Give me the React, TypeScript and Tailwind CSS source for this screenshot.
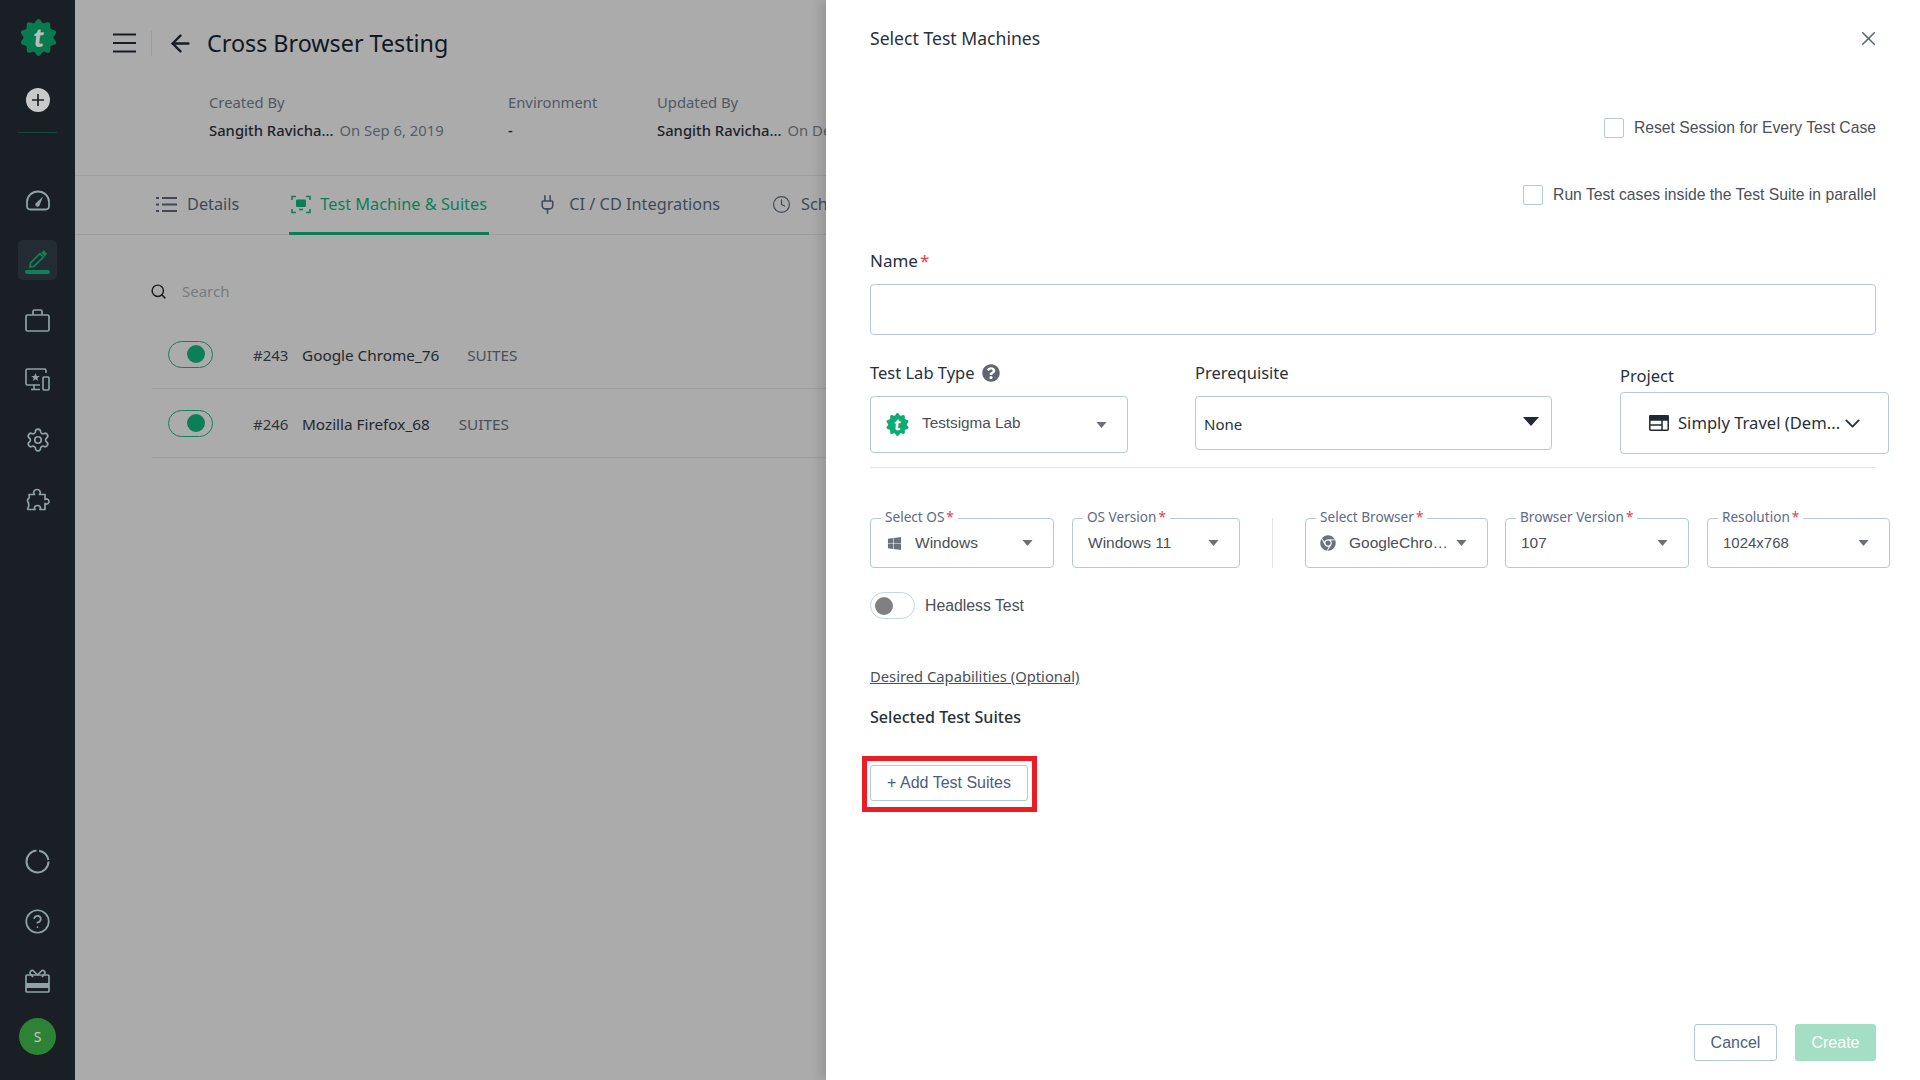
import React from "react";
import { Settings, CircleHelp, Plug, Clock, Search, X, ChevronDown, ArrowLeft } from "lucide-react";
import { FaChrome, FaWindows, FaQuestionCircle } from "react-icons/fa";

const noto = "font-['Noto_Sans',sans-serif]";
const arial = "font-['Liberation_Sans',Arial,sans-serif]";

function badgePath(cx: number, cy: number, r1: number, r2: number, n: number) {
  let d = "";
  const steps = n * 8;
  for (let i = 0; i <= steps; i++) {
    const a = (i / steps) * Math.PI * 2;
    const r = (r1 + r2) / 2 + ((r2 - r1) / 2) * Math.cos(a * n);
    d += `${i === 0 ? "M" : "L"}${(cx + r * Math.sin(a)).toFixed(2)} ${(cy - r * Math.cos(a)).toFixed(2)}`;
  }
  return d + "Z";
}

function Logo({ size, color, t }: { size: number; color: string; t: string }) {
  return (
    <svg width={size} height={size} viewBox="0 0 36 36">
      <path d={badgePath(18, 18, 14.5, 18, 10)} fill={color} />
      <text x="18" y="27" textAnchor="middle" fontSize="25" fontWeight="700" fontStyle="italic" fill={t} fontFamily="Noto Sans, sans-serif" transform="rotate(-6 18 18)">t</text>
    </svg>
  );
}

function Caret({ w = 11, h = 6, color = "#6b6f76" }: { w?: number; h?: number; color?: string }) {
  return (
    <svg className="shrink-0" width={w} height={h} viewBox="0 0 10 6"><polygon points="0,0 10,0 5,6" fill={color} /></svg>
  );
}

function SideIcon({ children, mt }: { children: React.ReactNode; mt: string }) {
  return <div className={`flex h-[40px] w-[39px] items-center justify-center ${mt}`}>{children}</div>;
}

function Sidebar() {
  const c = "#8fa3a3";
  return (
    <aside className="flex h-full w-[75px] shrink-0 flex-col items-center bg-[#191f25]">
      <div className="mt-[19px] ml-[2px] flex h-[36px] items-center justify-center">
        <Logo size={37} color="#087a50" t="#b9bdb9" />
      </div>
      <div className="mt-[33px] flex h-[24px] w-[24px] items-center justify-center rounded-full bg-[#c9c9c9]">
        <svg width="14" height="14" viewBox="0 0 14 14"><path d="M7 1v12M1 7h12" stroke="#1a2026" strokeWidth="1.7" /></svg>
      </div>
      <div className="mt-[20px] h-px w-[39px] bg-[#0d4a35]" />
      <SideIcon mt="mt-[47px]">
        <svg width="24" height="21" viewBox="0 0 24 21" fill="none" stroke={c} strokeWidth="1.800">
          <path d="M4.500 19.500H19.500c2 0 3.500-1 3.500-3.500V12C23 6 18 1.500 12 1.500S1 6 1 12V16c0 2.500 1.500 3.500 3.500 3.500Z" />
          <path d="M9.500 13.500L17 6.500l-3.500 9a2.200 2.200 0 1 1-4-2Z" fill={c} stroke="none" />
        </svg>
      </SideIcon>
      <SideIcon mt="mt-[20px]">
        <div className="flex h-[40px] w-[39px] flex-col items-center justify-center rounded-[5px] bg-[#232b33] pt-[2px]">
          <svg width="22" height="19" viewBox="0 0 22 19" fill="none" stroke="#0d8159" strokeWidth="1.800">
            <path d="M3 18l.5-4L13 4.500l3.500 3.500L7 17.500l-4 .5Z" />
            <path d="M15.500 2.500l3.500 3.500" strokeWidth="3.500" />
          </svg>
          <div className="mt-[2px] h-[4px] w-[25px] rounded-[2px] bg-[#0d8159]" />
        </div>
      </SideIcon>
      <SideIcon mt="mt-[20px]">
        <svg width="25" height="23" viewBox="0 0 25 23" fill="none" stroke={c} strokeWidth="1.700">
          <rect x="1" y="6" width="23" height="16" rx="1.500" />
          <path d="M8 6V2.500A1.500 1.500 0 0 1 9.500 1h6A1.500 1.500 0 0 1 17 2.500V6" />
        </svg>
      </SideIcon>
      <SideIcon mt="mt-[19px]">
        <svg width="25" height="23" viewBox="0 0 25 23" fill="none" stroke={c} strokeWidth="1.600">
          <path d="M21 5V2.500A1.500 1.500 0 0 0 19.500 1H2.500A1.500 1.500 0 0 0 1 2.500V15.500A1.500 1.500 0 0 0 2.500 17H15" />
          <path d="M9 17v4M6 21.500h9" />
          <rect x="18" y="9" width="6" height="13" rx="1" />
          <polygon points="10.500,5 11.700,8 14.800,8 12.300,10 13.200,13 10.500,11.200 7.800,13 8.700,10 6.200,8 9.300,8" fill={c} stroke="none" />
        </svg>
      </SideIcon>
      <SideIcon mt="mt-[21px]"><Settings size={26} color={c} strokeWidth={1.6} /></SideIcon>
      <SideIcon mt="mt-[20px]">
        <svg width="25" height="25" viewBox="0 0 25 25" fill="none" stroke={c} strokeWidth="1.700" strokeLinejoin="round">
          <path d="M4 6.500h5.500c-1.800-1.500-.5-5 2.500-5s4.300 3.500 2.500 5H20v5c1.500-1.300 4-.2 4 2s-2.500 3.300-4 2V21.500h-5c1.300-2.500-.5-4-2.500-4s-4 1.500-2.500 4H3.500c-1-.1-1-.6-.5-1.500 1.200-2.200 1.200-3.800 0-6-.8-1.500 0-3.200 1-4 .6-.5.300-2 0-3.500Z" />
        </svg>
      </SideIcon>
      <div className="flex-1" />
      <SideIcon mt="">
        <svg width="25" height="25" viewBox="0 0 25 25" fill="none" stroke={c} strokeWidth="2">
          <path d="M23.500 12.500A11 11 0 1 1 11.500 1.500" />
          <path d="M14 1.700A11 11 0 0 1 23.400 11" />
        </svg>
      </SideIcon>
      <SideIcon mt="mt-[20px]"><CircleHelp size={27} color={c} strokeWidth={1.5} /></SideIcon>
      <SideIcon mt="mt-[20px]">
        <svg width="25" height="24" viewBox="0 0 25 24" fill="none" stroke={c} strokeWidth="1.700">
          <rect x="1" y="6" width="23" height="17" rx="1" />
          <path d="M1 14h23v5H1Z" fill={c} stroke="none" />
          <path d="M12.500 6L8 1.500a2.500 2.500 0 0 0-3 3L8 8M12.500 6L17 1.500a2.500 2.500 0 0 1 3 3L17 8" />
        </svg>
      </SideIcon>
      <div className={`mt-[17px] mb-[25px] flex h-[37px] w-[37px] items-center justify-center rounded-full bg-[#2d8236] text-[14px] text-[#c4c9c4] ${noto}`}>S</div>
    </aside>
  );
}

function Meta({ w, label, name, date }: { w: string; label: string; name: string; date?: string }) {
  return (
    <div className={`${w} shrink-0 whitespace-nowrap text-[14.8px]`}>
      <div className="mt-[-1px] h-[28px] leading-[28px] text-[#525862]">{label}</div>
      <div className="h-[28px] leading-[28px]">
        <span className="font-medium text-[#1d2229]">{name}</span>
        <span className="ml-[6px] text-[#555c68]">{date}</span>
      </div>
    </div>
  );
}

function Row({ num, name, gap }: { num: string; name: string; gap: string }) {
  return (
    <div className="ml-[77px] flex h-[69px] items-center border-b border-[#9e9e9e] pl-[16px]">
      <div className="flex h-[27px] w-[45px] shrink-0 items-center justify-end rounded-full border border-[#128058] pr-[7px]">
        <div className="h-[18px] w-[18px] rounded-full bg-[#0b8058]" />
      </div>
      <span className="ml-[40px] w-[49px] pt-[2px] text-[15px] text-[#2f343b]">{num}</span>
      <span className="pt-[2px] text-[15.3px] text-[#23282e]">{name}</span>
      <span className={`${gap} pt-[2px] text-[15.300px] text-[#4a4f58]`}>SUITES</span>
    </div>
  );
}

function LeftContent() {
  return (
    <main className={`h-full w-[751px] shrink-0 overflow-hidden bg-[#ababab] ${noto}`}>
      <header className="flex h-[86px] items-center">
        <svg className="ml-[38px]" width="23" height="20" viewBox="0 0 23 20"><path d="M0 1.500h23M0 10h23M0 18.500h23" stroke="#171d25" strokeWidth="2" /></svg>
        <div className="ml-[15px] h-[25px] w-px bg-[#9a9a9a]" />
        <ArrowLeft className="ml-[15px]" size={27} color="#171d25" strokeWidth={2.1} />
        <h1 className="ml-[13px] text-[23.300px] leading-[32px] text-[#12181f]">Cross Browser Testing</h1>
      </header>
      <section className="flex h-[90px] border-b border-[#9e9e9e] pl-[134px] pt-[3px]">
        <Meta w="w-[299px]" label="Created By" name="Sangith Ravicha..." date="On Sep 6, 2019" />
        <Meta w="w-[149px]" label="Environment" name="-" />
        <Meta w="w-[300px]" label="Updated By" name="Sangith Ravicha..." date="On Dec 12, 2022" />
      </section>
      <nav className="flex h-[59px] items-stretch border-b border-[#9e9e9e] pb-[2px] text-[16.300px] whitespace-nowrap text-[#414958]">
        <div className="ml-[81px] flex shrink-0 items-center gap-[10px]">
          <svg width="21" height="17" viewBox="0 0 21 17" fill="none" stroke="#414958" strokeWidth="2">
            <path d="M0 2h3M6 2h15M0 8.500h3M6 8.500h15M0 15h3M6 15h15" />
          </svg>
          <span>Details</span>
        </div>
        <div className="-mb-[3px] ml-[50px] flex w-[200px] shrink-0 items-center gap-[9px] border-b-[3px] border-[#0d7f58] pl-[2px] text-[#0b7f58]">
          <svg width="20" height="19" viewBox="0 0 20 19" fill="none" stroke="#0b7f58" strokeWidth="1.600">
            <path d="M1 5V1.500h4M15 1.500h4V5M1 14v3.500h4M15 17.500h4V14" />
            <rect x="5" y="4.500" width="10" height="7.500" fill="#0b7f58" stroke="none" rx="1" />
            <path d="M8 14.500h4" />
          </svg>
          <span>Test Machine &amp; Suites</span>
        </div>
        <div className="ml-[48px] flex shrink-0 items-center gap-[11px]">
          <Plug size={21} color="#414958" strokeWidth={1.8} />
          <span>CI / CD Integrations</span>
        </div>
        <div className="ml-[52px] flex shrink-0 items-center gap-[10px]">
          <Clock size={19} color="#414958" strokeWidth={1.5} />
          <span>Schedules</span>
        </div>
      </nav>
      <div className="mt-[42px] ml-[75px] flex h-[28px] items-center gap-[15px]">
        <Search size={17} color="#16191d" strokeWidth={2} />
        <span className="text-[15px] text-[#777b80]">Search</span>
      </div>
      <div className="mt-[15px]">
        <Row num="#243" name="Google Chrome_76" gap="ml-[28px]" />
        <Row num="#246" name="Mozilla Firefox_68" gap="ml-[29px]" />
      </div>
    </main>
  );
}

function FloatSelect({ w, label, value, icon, size = "text-[15.500px]", valueGap = "" }: { w: string; label: string; value: string; icon?: React.ReactNode; size?: string; valueGap?: string }) {
  return (
    <div className={`relative flex h-[50px] ${w} shrink-0 items-center rounded-[4px] border border-[#b5c9d8] pr-[20px] pl-[15px]`}>
      <span className={`absolute -top-[12px] left-[10px] bg-white px-[4px] text-[13.600px] leading-[20px] whitespace-nowrap text-[#5d6b85] ${noto}`}>
        {label}<span className="ml-[2px] text-[#e8404f]">*</span>
      </span>
      {icon}
      <span className={`min-w-0 flex-1 truncate ${size} ${valueGap} text-[#4a4f58]`}>{value}</span>
      <Caret />
    </div>
  );
}

function Panel() {
  return (
    <section className={`flex h-full min-w-0 flex-1 flex-col bg-white px-[44px] shadow-[-6px_0_10px_rgba(0,0,0,0.12)] ${arial}`}>
      <div className="flex h-[76px] shrink-0 items-center justify-between">
        <h2 className={`text-[17.600px] leading-[24px] text-[#283139] ${noto}`}>Select Test Machines</h2>
        <X className="mr-[-4px]" size={23} color="#5b6672" strokeWidth={1.6} />
      </div>
      <label className="mt-[42px] flex h-[20px] items-center justify-end gap-[10px] text-[15.700px] text-[#4a4f58]">
        <span className="h-[20px] w-[20px] rounded-[2px] border border-[#b5c9d8]" />
        Reset Session for Every Test Case
      </label>
      <label className="mt-[47px] flex h-[20px] items-center justify-end gap-[10px] text-[15.700px] text-[#4a4f58]">
        <span className="h-[20px] w-[20px] rounded-[2px] border border-[#b5c9d8]" />
        Run Test cases inside the Test Suite in parallel
      </label>
      <div className={`mt-[44px] h-[24px] text-[17px] leading-[24px] text-[#283139] ${noto}`}>
        Name<span className="ml-[2px] text-[#e8404f]">*</span>
      </div>
      <div className="mt-[11px] h-[51px] rounded-[4px] border border-[#b5c9d8]" />
      <div className="mt-[26px] -mr-[13px] flex h-[93px] items-start">
        <div className="w-[258px] shrink-0">
          <div className={`flex h-[24px] items-center gap-[7px] text-[16.500px] text-[#283139] ${noto}`}>
            Test Lab Type <FaQuestionCircle size={18} color="#5f6670" />
          </div>
          <div className="mt-[11px] flex h-[57px] items-center rounded-[4px] border border-[#b5c9d8] pr-[20px] pl-[15px]">
            <Logo size={23} color="#0dab72" t="#ffffff" />
            <span className="mb-[2px] ml-[13px] flex-1 text-[15.300px] text-[#4a4f58]">Testsigma Lab</span>
            <Caret />
          </div>
        </div>
        <div className="ml-[67px] w-[357px] shrink-0">
          <div className={`h-[24px] text-[16.500px] leading-[24px] text-[#283139] ${noto}`}>Prerequisite</div>
          <div className="mt-[11px] flex h-[54px] items-center rounded-[4px] border border-[#b5c9d8] pr-[12px] pl-[8px]">
            <span className={`flex-1 pt-[2px] text-[15px] text-[#283139] ${noto}`}>None</span>
            <svg className="mb-[4px]" width="16" height="9" viewBox="0 0 16 9"><polygon points="0,0 16,0 8,9" fill="#1f2a35" /></svg>
          </div>
        </div>
        <div className="ml-[68px] w-[269px] shrink-0 pt-[3px]">
          <div className={`h-[24px] text-[16.500px] leading-[24px] text-[#283139] ${noto}`}>Project</div>
          <div className="mt-[4px] flex h-[62px] items-center rounded-[4px] border border-[#b5c9d8] pr-[24px] pl-[28px]">
            <svg className="shrink-0" width="20" height="16" viewBox="0 0 20 16" fill="none" stroke="#1f2a35" strokeWidth="1.500">
              <rect x="0.800" y="0.800" width="18.400" height="14.400" rx="1" />
              <path d="M1 1h18v4H1Z" fill="#1f2a35" />
              <path d="M1 10h12M13 5v10" />
            </svg>
            <span className={`ml-[9px] flex-1 pt-[1px] text-[16.600px] whitespace-nowrap text-[#283139] ${noto}`}>Simply Travel (Dem...</span>
            <ChevronDown size={25} color="#283139" strokeWidth={1.7} className="-mr-[1px] shrink-0" />
          </div>
        </div>
      </div>
      <div className="mt-[13px] h-px bg-[#e4e6e8]" />
      <div className="mt-[50px] -mr-[14px] flex">
        <FloatSelect w="w-[184px]" label="Select OS" value="Windows" icon={<FaWindows className="mr-[13px] ml-[1px] shrink-0" size={15} color="#6d7178" />} />
        <div className="w-[18px] shrink-0" />
        <FloatSelect w="w-[168px]" label="OS Version" value="Windows 11" />
        <div className="mx-[32px] h-[50px] w-px shrink-0 bg-[#e2e5e8]" />
        <FloatSelect w="w-[183px]" label="Select Browser" value="GoogleChrome" valueGap="mr-[4px]" icon={<FaChrome className="mr-[13px] ml-[-1px] shrink-0" size={16} color="#6d7178" />} />
        <div className="w-[17px] shrink-0" />
        <FloatSelect w="w-[184px]" label="Browser Version" value="107" />
        <div className="w-[18px] shrink-0" />
        <FloatSelect w="w-[183px]" label="Resolution" value="1024x768" size="text-[15px]" />
      </div>
      <div className="mt-[24px] flex h-[27px] items-center">
        <div className="flex h-[27px] w-[45px] items-center rounded-full border border-[#c4d6e2] pl-[4px]">
          <div className="h-[18px] w-[18px] rounded-full bg-[#808080]" />
        </div>
        <span className="ml-[10px] text-[15.800px] text-[#4a4f58]">Headless Test</span>
      </div>
      <div className={`mt-[45px] h-[24px] text-[14.750px] leading-[24px] text-[#4a4f58] underline ${noto}`}>Desired Capabilities (Optional)</div>
      <div className={`mt-[17px] h-[24px] text-[16.100px] leading-[24px] font-medium text-[#283139] ${noto}`}>Selected Test Suites</div>
      <div className="mt-[27px] -ml-[8px] h-[56px] w-[175px] border-[5px] border-[#ed1c24] pt-[4px] pl-[3px]">
        <div className="flex h-[36px] w-[158px] items-center justify-center rounded-[3px] border border-[#b5c9d8] text-[16px] text-[#4d5d80]">+ Add Test Suites</div>
      </div>
      <div className="flex-1" />
      <div className="mb-[19px] flex justify-end gap-[18px]">
        <div className="flex h-[37px] w-[83px] items-center justify-center rounded-[3px] border border-[#b0c8da] text-[16px] text-[#4d5d80]">Cancel</div>
        <div className="flex h-[37px] w-[81px] items-center justify-center rounded-[3px] bg-[#a3dec5] text-[16px] text-white">Create</div>
      </div>
    </section>
  );
}

export default function App() {
  return (
    <div className="flex h-screen w-screen overflow-hidden">
      <Sidebar />
      <LeftContent />
      <Panel />
    </div>
  );
}
